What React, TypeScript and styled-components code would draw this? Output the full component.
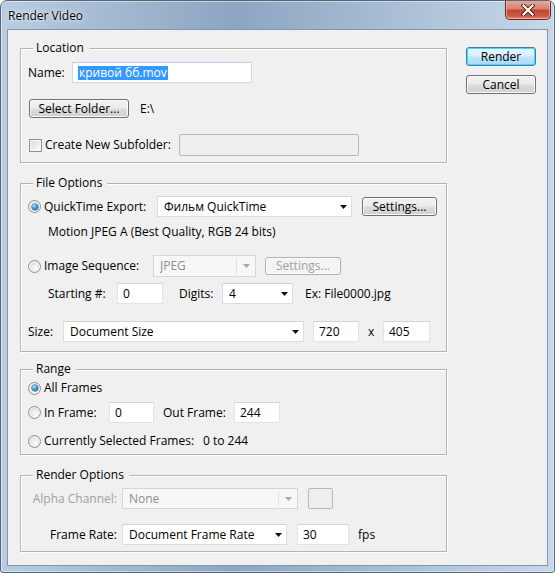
import React from "react";
import styled, { createGlobalStyle, css } from "styled-components";

const Global = createGlobalStyle`
  html, body { margin: 0; padding: 0; background: #ffffff; }
  body {
    font-family: "Open Sans", "Noto Sans", "DejaVu Sans", sans-serif;
    font-size: 12px;
    color: #000;
  }
  * { box-sizing: border-box; }
`;

const Window = styled.div`
  width: 555px;
  height: 573px;
  display: flex;
  flex-direction: column;
  border: 1px solid #56677a;
  border-radius: 7px 7px 3px 3px;
  background: linear-gradient(
    90deg,
    #b9cde2 0%,
    #a5bbd3 18%,
    #8ca6c2 42%,
    #9fb6cf 62%,
    #b2c6dc 80%,
    #c6d7e9 100%
  );
  box-shadow: inset 0 0 0 1px rgba(255, 255, 255, 0.45);
  overflow: hidden;
`;

const TitleBar = styled.div`
  height: 28px;
  display: flex;
  align-items: flex-start;
  flex: none;
`;

const Title = styled.div`
  margin: 7px 0 0 7px;
  line-height: 16px;
  font-size: 12px;
  color: #000;
  text-shadow: 0 0 6px rgba(255, 255, 255, 0.9), 0 0 2px rgba(255, 255, 255, 0.8);
`;

const CloseButton = styled.div`
  margin: -1px 3px 0 auto;
  width: 46px;
  height: 20px;
  border: 1px solid #5e2a24;
  border-top: none;
  border-radius: 0 0 5px 5px;
  background: linear-gradient(
    180deg,
    #e6aba0 0%,
    #d98272 45%,
    #c4432f 55%,
    #cf5c44 85%,
    #e08b6d 100%
  );
  box-shadow: inset 0 0 0 1px rgba(255, 210, 200, 0.55);
  display: flex;
  align-items: center;
  justify-content: center;
`;

const Client = styled.div`
  flex: 1;
  margin: 0 6px 6px;
  border: 1px solid #8595a8;
  background: #f0f0f0;
  display: flex;
  align-items: flex-start;
  padding: 10px 0 0 12px;
`;

const MainColumn = styled.div`
  width: 427px;
  display: flex;
  flex-direction: column;
`;

const ButtonColumn = styled.div`
  margin-left: 19px;
  padding-top: 7px;
  display: flex;
  flex-direction: column;
  gap: 9px;
`;

const Group = styled.fieldset<{ $top: number; $pb: number }>`
  margin: ${(p) => p.$top}px 0 0 0;
  padding: 0 7px ${(p) => p.$pb}px 7px;
  min-width: 0;
  border: 1px solid #b4b4b4;
  box-shadow: 1px 1px 0 #ffffff, inset 1px 1px 0 #ffffff;
  display: flex;
  flex-direction: column;
`;

const Legend = styled.legend`
  margin-left: 5px;
  padding: 0 5px 0 3px;
  line-height: 16px;
  background: #f0f0f0;
  color: #000;
`;

const Row = styled.div<{ $top: number; $h: number; $indent?: number }>`
  display: flex;
  align-items: center;
  height: ${(p) => p.$h}px;
  margin-top: ${(p) => p.$top}px;
  padding-left: ${(p) => p.$indent ?? 0}px;
  white-space: nowrap;
`;

const Label = styled.span<{ $w?: number; $ml?: number; $disabled?: boolean; $right?: boolean }>`
  display: inline-block;
  flex: none;
  width: ${(p) => (p.$w ? `${p.$w}px` : "auto")};
  margin-left: ${(p) => p.$ml ?? 0}px;
  color: ${(p) => (p.$disabled ? "#a0a0a0" : "#000")};
  text-align: ${(p) => (p.$right ? "right" : "left")};
  line-height: 16px;
`;

const Option = styled.label<{ $w: number }>`
  display: flex;
  align-items: center;
  flex: none;
  width: ${(p) => p.$w}px;
  gap: 3px;
  line-height: 16px;
`;

const Radio = styled.span<{ $checked?: boolean }>`
  position: relative;
  flex: none;
  width: 13px;
  height: 13px;
  border-radius: 50%;
  border: 1px solid #8e8f8f;
  background: radial-gradient(circle at 60% 65%, #fdfdfd 0%, #e9e9e9 45%, #cfcfcf 100%);
  box-shadow: inset 0 0 0 1px #f4f4f4;
  ${(p) =>
    p.$checked &&
    css`
      &::after {
        content: "";
        position: absolute;
        left: 2.5px;
        top: 2.5px;
        width: 6px;
        height: 6px;
        border-radius: 50%;
        background: radial-gradient(circle at 35% 30%, #a9e2ff 0%, #3a9ad6 45%, #0f4f80 100%);
        box-shadow: 0 0 0 0.5px #1b4f78;
      }
    `}
`;

const Checkbox = styled.span`
  flex: none;
  width: 13px;
  height: 13px;
  margin-left: 1px;
  border: 1px solid #8e8f8f;
  background: linear-gradient(135deg, #d8d8d8 0%, #f2f2f2 70%, #ffffff 100%);
  box-shadow: inset 0 0 0 1px #f6f6f6;
`;

const buttonBase = css`
  flex: none;
  display: flex;
  align-items: center;
  justify-content: center;
  border-radius: 3px;
  line-height: 16px;
  font-size: 12px;
`;

const Button = styled.div<{ $w: number; $h?: number; $ml?: number; $default?: boolean; $disabled?: boolean }>`
  ${buttonBase};
  width: ${(p) => p.$w}px;
  height: ${(p) => p.$h ?? 19}px;
  margin-left: ${(p) => p.$ml ?? 0}px;
  border: 1px solid #707070;
  background: linear-gradient(180deg, #f2f2f2 0%, #ebebeb 48%, #dddddd 52%, #cfcfcf 100%);
  box-shadow: inset 0 0 0 1px #fbfbfb;
  color: #000;
  ${(p) =>
    p.$default &&
    css`
      border-color: #3c7fb1;
      background: linear-gradient(180deg, #eaf6fd 0%, #d9f0fc 48%, #bee6fd 52%, #a7d9f5 100%);
      box-shadow: inset 0 0 0 1px #48d6fb;
    `}
  ${(p) =>
    p.$disabled &&
    css`
      border-color: #adb2b5;
      background: #f4f4f4;
      box-shadow: inset 0 0 0 1px #fcfcfc;
      color: #a0a0a0;
    `}
`;

const TextBox = styled.div<{ $w: number; $h?: number; $ml?: number; $focused?: boolean }>`
  flex: none;
  width: ${(p) => p.$w}px;
  height: ${(p) => p.$h ?? 21}px;
  margin-left: ${(p) => p.$ml ?? 0}px;
  background: #ffffff;
  border: 1px solid #e2e3ea;
  border-top-color: #d2d4da;
  display: flex;
  align-items: center;
  padding-left: 5px;
  line-height: 16px;
  ${(p) =>
    p.$focused &&
    css`
      border-color: #c5dbee;
      border-top-color: #b7d0e8;
    `}
`;

const DisabledBox = styled.div<{ $w: number; $h: number; $ml?: number }>`
  flex: none;
  width: ${(p) => p.$w}px;
  height: ${(p) => p.$h}px;
  margin-left: ${(p) => p.$ml ?? 0}px;
  background: #eeeeee;
  border: 1px solid #b9b9b9;
  border-radius: 2px;
`;

const Selected = styled.span`
  background: #3399ff;
  color: #ffffff;
  padding: 0 1px;
  line-height: 14px;
`;

const Select = styled.div<{ $w: number; $h?: number; $ml?: number; $disabled?: boolean }>`
  flex: none;
  width: ${(p) => p.$w}px;
  height: ${(p) => p.$h ?? 21}px;
  margin-left: ${(p) => p.$ml ?? 0}px;
  background: #ffffff;
  border: 1px solid #dcdde2;
  border-top-color: #d0d2d8;
  display: flex;
  align-items: center;
  padding-left: 6px;
  line-height: 16px;
  color: ${(p) => (p.$disabled ? "#8d8d8d" : "#000")};
  ${(p) =>
    p.$disabled &&
    css`
      background: #f7f7f7;
      border-color: #d6d6d6;
    `}
`;

const SelectText = styled.span`
  flex: 1;
  overflow: hidden;
`;

const ArrowZone = styled.span<{ $disabled?: boolean }>`
  flex: none;
  width: ${(p) => (p.$disabled ? 19 : 16)}px;
  align-self: stretch;
  display: flex;
  align-items: center;
  justify-content: center;
  ${(p) =>
    p.$disabled &&
    css`
      border-left: 1px solid #e3e3e3;
      margin: 2px 0;
    `}
`;

const Arrow = ({ disabled }: { disabled?: boolean }) => (
  <svg width="7" height="4" viewBox="0 0 7 4">
    <path d="M0 0 H7 L3.5 4 Z" fill={disabled ? "#a8a8a8" : "#111"} />
  </svg>
);

const Dropdown = ({
  w,
  h,
  ml,
  disabled,
  children,
}: {
  w: number;
  h?: number;
  ml?: number;
  disabled?: boolean;
  children: React.ReactNode;
}) => (
  <Select $w={w} $h={h} $ml={ml} $disabled={disabled}>
    <SelectText>{children}</SelectText>
    <ArrowZone $disabled={disabled}>
      <Arrow disabled={disabled} />
    </ArrowZone>
  </Select>
);

const CloseGlyph = () => (
  <svg width="14" height="12" viewBox="0 0 14 12">
    <path d="M2.5 1.5 L11.5 10.5 M11.5 1.5 L2.5 10.5" stroke="#4a1d18" strokeWidth="4" strokeLinecap="square" />
    <path d="M2.5 1.5 L11.5 10.5 M11.5 1.5 L2.5 10.5" stroke="#ffffff" strokeWidth="2.2" strokeLinecap="square" />
  </svg>
);

export default function App() {
  return (
    <>
      <Global />
      <Window>
        <TitleBar>
          <Title>Render Video</Title>
          <CloseButton>
            <CloseGlyph />
          </CloseButton>
        </TitleBar>
        <Client>
          <MainColumn>
            <Group $top={0} $pb={6}>
              <Legend>Location</Legend>
              <Row $top={6} $h={21}>
                <Label $w={44}>Name:</Label>
                <TextBox $w={180} $focused>
                  <Selected>кривой бб.mov</Selected>
                </TextBox>
              </Row>
              <Row $top={16} $h={19}>
                <Button $w={100} $ml={1}>Select Folder...</Button>
                <Label $ml={11}>E:\</Label>
              </Row>
              <Row $top={16} $h={22}>
                <Option $w={151}>
                  <Checkbox />
                  <span>Create New Subfolder:</span>
                </Option>
                <DisabledBox $w={180} $h={22} />
              </Row>
            </Group>

            <Group $top={12} $pb={9}>
              <Legend>File Options</Legend>
              <Row $top={5} $h={21}>
                <Option $w={129}>
                  <Radio $checked />
                  <span>QuickTime Export:</span>
                </Option>
                <Dropdown w={195}>Фильм QuickTime</Dropdown>
                <Button $w={75} $ml={10}>Settings...</Button>
              </Row>
              <Row $top={7} $h={16} $indent={20}>
                <Label>Motion JPEG A (Best Quality, RGB 24 bits)</Label>
              </Row>
              <Row $top={15} $h={22}>
                <Option $w={125}>
                  <Radio />
                  <span>Image Sequence:</span>
                </Option>
                <Dropdown w={103} h={22} disabled>
                  JPEG
                </Dropdown>
                <Button $w={76} $h={18} $ml={9} $disabled>
                  Settings...
                </Button>
              </Row>
              <Row $top={6} $h={21} $indent={20}>
                <Label $w={69}>Starting #:</Label>
                <TextBox $w={46}>0</TextBox>
                <Label $w={43} $ml={16}>Digits:</Label>
                <Dropdown w={71}>4</Dropdown>
                <Label $ml={12}>Ex: File0000.jpg</Label>
              </Row>
              <Row $top={17} $h={21}>
                <Label $w={35}>Size:</Label>
                <Dropdown w={241}>Document Size</Dropdown>
                <TextBox $w={46} $ml={9}>720</TextBox>
                <Label $w={15} $ml={9}>x</Label>
                <TextBox $w={47}>405</TextBox>
              </Row>
            </Group>

            <Group $top={9} $pb={5}>
              <Legend>Range</Legend>
              <Row $top={3} $h={16}>
                <Option $w={120}>
                  <Radio $checked />
                  <span>All Frames</span>
                </Option>
              </Row>
              <Row $top={6} $h={21}>
                <Option $w={81}>
                  <Radio />
                  <span>In Frame:</span>
                </Option>
                <TextBox $w={45}>0</TextBox>
                <Label $w={71} $ml={9}>Out Frame:</Label>
                <TextBox $w={46}>244</TextBox>
              </Row>
              <Row $top={10} $h={16}>
                <Option $w={175}>
                  <Radio />
                  <span>Currently Selected Frames:</span>
                </Option>
                <Label>0 to 244</Label>
              </Row>
            </Group>

            <Group $top={12} $pb={6}>
              <Legend>Render Options</Legend>
              <Row $top={5} $h={21}>
                <Label $w={89} $right $disabled>
                  Alpha Channel:
                </Label>
                <Dropdown w={176} ml={5} disabled>
                  None
                </Dropdown>
                <DisabledBox $w={25} $h={21} $ml={10} />
              </Row>
              <Row $top={15} $h={21}>
                <Label $w={89} $right>
                  Frame Rate:
                </Label>
                <Dropdown w={165} ml={5}>
                  Document Frame Rate
                </Dropdown>
                <TextBox $w={52} $ml={10}>30</TextBox>
                <Label $ml={9}>fps</Label>
              </Row>
            </Group>
          </MainColumn>
          <ButtonColumn>
            <Button $w={70} $default>
              Render
            </Button>
            <Button $w={70}>Cancel</Button>
          </ButtonColumn>
        </Client>
      </Window>
    </>
  );
}
